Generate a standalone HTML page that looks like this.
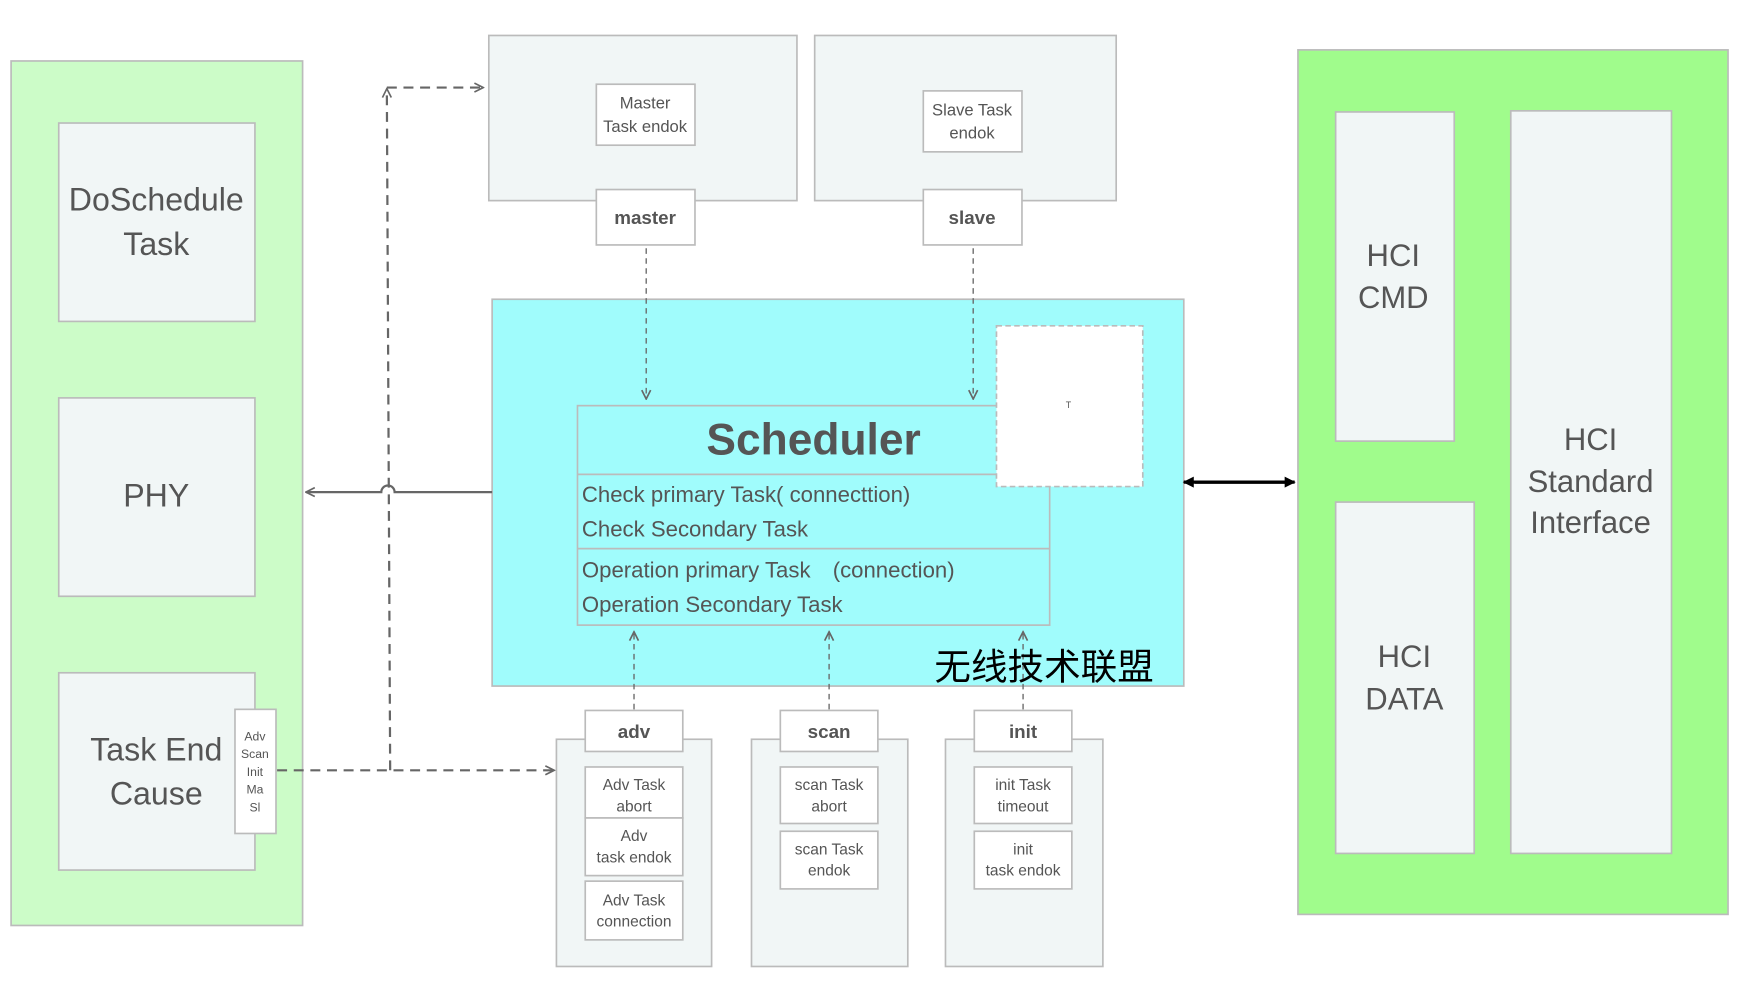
<!DOCTYPE html>
<html><head><meta charset="utf-8"><style>html,body{margin:0;padding:0;background:#fff;width:1738px;height:982px;overflow:hidden}</style></head>
<body>
<svg width="1738" height="982" viewBox="0 0 1568 886" preserveAspectRatio="none" xmlns="http://www.w3.org/2000/svg" font-family="Liberation Sans, sans-serif" fill="#555">
<defs>
<marker id="ao" markerWidth="10" markerHeight="10" refX="9" refY="5" orient="auto" markerUnits="userSpaceOnUse"><path d="M1,1 L9,5 L1,9" fill="none" stroke="#666" stroke-width="1.5"/></marker>
<marker id="af" markerWidth="12" markerHeight="12" refX="10" refY="6" orient="auto" markerUnits="userSpaceOnUse"><path d="M1,1 L11,6 L1,11 Z" fill="#000"/></marker>
</defs>
<g stroke="#bbb" stroke-width="1.5">
<rect x="10" y="55" width="263" height="780" fill="#ccfcc8"/>
<rect x="53" y="111" width="177" height="179" fill="#f1f6f6"/>
<rect x="53" y="359" width="177" height="179" fill="#f1f6f6"/>
<rect x="53" y="607" width="177" height="178" fill="#f1f6f6"/>
<rect x="212" y="640" width="37" height="112" fill="#fff"/>
<rect x="441" y="32" width="278" height="149" fill="#f1f6f6"/>
<rect x="735" y="32" width="272" height="149" fill="#f1f6f6"/>
<rect x="538" y="76" width="89" height="55" fill="#fff"/>
<rect x="538" y="171" width="89" height="50" fill="#fff"/>
<rect x="833" y="82" width="89" height="55" fill="#fff"/>
<rect x="833" y="171" width="89" height="50" fill="#fff"/>
<rect x="444" y="270" width="624" height="349" fill="#a0fcfc"/>
<rect x="521" y="366" width="426" height="198" fill="#a0fcfc"/>
<line x1="521" y1="428" x2="947" y2="428"/>
<line x1="521" y1="495" x2="947" y2="495"/>
<rect x="1171" y="45" width="388" height="780" fill="#a0fc8c"/>
<rect x="1205" y="101" width="107" height="297" fill="#f1f6f6"/>
<rect x="1205" y="453" width="125" height="317" fill="#f1f6f6"/>
<rect x="1363" y="100" width="145" height="670" fill="#f1f6f6"/>
<rect x="502" y="667" width="140" height="205" fill="#f1f6f6"/>
<rect x="678" y="667" width="141" height="205" fill="#f1f6f6"/>
<rect x="853" y="667" width="142" height="205" fill="#f1f6f6"/>
<rect x="528" y="641" width="88" height="37" fill="#fff"/>
<rect x="704" y="641" width="88" height="37" fill="#fff"/>
<rect x="879" y="641" width="88" height="37" fill="#fff"/>
<rect x="528" y="692" width="88" height="46" fill="#fff"/>
<rect x="528" y="738" width="88" height="52" fill="#fff"/>
<rect x="528" y="795" width="88" height="53" fill="#fff"/>
<rect x="704" y="692" width="88" height="51" fill="#fff"/>
<rect x="704" y="750" width="88" height="52" fill="#fff"/>
<rect x="879" y="692" width="88" height="51" fill="#fff"/>
<rect x="879" y="750" width="88" height="52" fill="#fff"/>
</g>
<rect x="899" y="294" width="132" height="145" fill="#fff" stroke="#bbb" stroke-width="1.5" stroke-dasharray="5,3"/>
<text x="964" y="368" font-size="8" text-anchor="middle">T</text>
<g fill="none" stroke="#666" stroke-width="1.2" stroke-dasharray="5,4">
<line x1="583" y1="224" x2="583" y2="360" marker-end="url(#ao)"/>
<line x1="878" y1="224" x2="878" y2="360" marker-end="url(#ao)"/>
<line x1="572" y1="640" x2="572" y2="570" marker-end="url(#ao)"/>
<line x1="748" y1="640" x2="748" y2="570" marker-end="url(#ao)"/>
<line x1="923" y1="640" x2="923" y2="570" marker-end="url(#ao)"/>
</g>
<g fill="none" stroke="#666" stroke-width="2" stroke-dasharray="9,6">
<line x1="352" y1="695" x2="349" y2="80" marker-end="url(#ao)"/>
<line x1="349" y1="79" x2="436" y2="79" marker-end="url(#ao)"/>
<line x1="250" y1="695" x2="500" y2="695" marker-end="url(#ao)"/>
</g>
<path d="M444,444 L356,444 A6,6 0 0 0 344,444 L276,444" fill="none" stroke="#666" stroke-width="2" marker-end="url(#ao)"/>
<line x1="1078" y1="435" x2="1168" y2="435" stroke="#000" stroke-width="3" marker-end="url(#af)"/>
<line x1="1160" y1="435" x2="1068" y2="435" stroke="#000" stroke-width="3" marker-end="url(#af)"/>
<g text-anchor="middle">
<text x="141" y="190" font-size="29">DoSchedule</text>
<text x="141" y="230" font-size="29">Task</text>
<text x="141" y="457" font-size="29">PHY</text>
<text x="141" y="686" font-size="29">Task End</text>
<text x="141" y="726" font-size="29">Cause</text>
<g font-size="11"><text x="230" y="668">Adv</text><text x="230" y="684">Scan</text><text x="230" y="700">Init</text><text x="230" y="716">Ma</text><text x="230" y="732">Sl</text></g>
<g font-size="15">
<text x="582" y="98">Master</text><text x="582" y="119">Task endok</text>
<text x="877" y="104">Slave Task</text><text x="877" y="125">endok</text>
</g>
<g font-size="17" font-weight="bold"><text x="582" y="202">master</text><text x="877" y="202">slave</text>
<text x="572" y="666">adv</text><text x="748" y="666">scan</text><text x="923" y="666">init</text></g>
<g font-size="14">
<text x="572" y="713">Adv Task</text><text x="572" y="732">abort</text>
<text x="572" y="759">Adv</text><text x="572" y="778">task endok</text>
<text x="572" y="817">Adv Task</text><text x="572" y="836">connection</text>
<text x="748" y="713">scan Task</text><text x="748" y="732">abort</text>
<text x="748" y="771">scan Task</text><text x="748" y="790">endok</text>
<text x="923" y="713">init Task</text><text x="923" y="732">timeout</text>
<text x="923" y="771">init</text><text x="923" y="790">task endok</text>
</g>
<text x="734" y="410" font-size="40" font-weight="bold">Scheduler</text>
<g font-size="28"><text x="1257" y="240">HCI</text><text x="1257" y="278">CMD</text>
<text x="1267" y="602">HCI</text><text x="1267" y="640">DATA</text>
<text x="1435" y="406">HCI</text><text x="1435" y="444">Standard</text><text x="1435" y="481">Interface</text></g>
</g>
<g font-size="20">
<text x="525" y="453">Check primary Task( connecttion)</text>
<text x="525" y="484">Check Secondary Task</text>
<text x="525" y="521">Operation primary Task　(connection)</text>
<text x="525" y="552">Operation Secondary Task</text>
</g>
<text x="843" y="613" font-size="33" fill="#000" font-family="Noto Sans CJK SC, sans-serif">无线技术联盟</text>
</svg>
</body></html>
